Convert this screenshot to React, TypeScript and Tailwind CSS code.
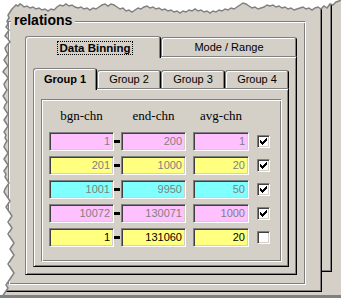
import React from 'react';

// torn paper edge, top (left → right) and left (top → bottom)
const topEdge: [number, number][] = [
  [10, 12], [12, 9], [14, 7], [16, 5], [18, 6], [20, 4], [22, 5], [24, 7], [27, 6], [30, 8], [33, 7], [36, 9],
  [39, 8], [42, 10], [45, 9], [48, 11], [51, 9], [54, 10], [57, 7], [60, 5], [63, 6], [66, 4], [69, 6], [72, 5],
  [75, 7], [78, 8], [81, 7], [84, 9], [87, 8], [90, 10], [93, 8], [96, 9], [99, 7], [102, 5], [105, 4], [108, 6],
  [111, 4], [114, 5], [117, 7], [120, 9], [123, 8], [126, 11], [129, 10], [132, 12], [135, 10], [138, 8], [141, 9],
  [144, 7], [147, 6], [150, 8], [153, 7], [156, 9], [159, 8], [162, 10], [165, 9], [168, 11], [171, 10], [174, 12],
  [177, 11], [180, 13], [183, 11], [186, 12], [189, 10], [192, 11], [195, 9], [198, 11], [201, 10], [204, 12],
  [207, 11], [210, 13], [213, 11], [216, 12], [219, 10], [222, 11], [225, 9], [228, 10], [231, 8], [234, 9],
  [237, 7], [240, 5], [243, 3], [246, 4], [249, 6], [252, 8], [255, 7], [258, 9], [261, 8], [264, 7], [267, 5],
  [270, 6], [273, 5], [276, 7], [279, 6], [282, 8], [285, 7], [288, 9], [291, 8], [294, 10], [297, 9], [300, 8],
  [303, 7], [306, 9], [309, 8], [312, 10], [315, 8], [318, 7], [321, 9], [324, 6], [327, 8], [330, 4], [333, 5],
  [336, 2], [339, 1], [341, 0],
];

const leftEdge: [number, number][] = [
  [10, 12], [8, 15], [9, 18], [7, 21], [8, 24], [6, 27], [9, 30], [7, 33], [5, 36], [8, 39], [10, 42], [7, 45],
  [5, 48], [6, 51], [8, 54], [6, 57], [4, 60], [6, 63], [8, 66], [5, 69], [3, 72], [6, 75], [8, 78], [6, 81],
  [4, 84], [5, 87], [7, 90], [5, 93], [3, 96], [5, 99], [7, 102], [5, 105], [4, 108], [6, 111], [8, 114], [6, 117],
  [4, 120], [6, 123], [8, 126], [6, 129], [4, 132], [6, 135], [5, 138], [7, 141], [5, 144], [4, 147], [6, 150],
  [8, 153], [6, 156], [4, 159], [6, 162], [8, 165], [6, 168], [4, 171], [6, 174], [5, 177], [7, 180], [9, 183],
  [7, 186], [5, 189], [4, 192], [6, 195], [8, 198], [10, 201], [8, 204], [6, 207], [8, 210], [10, 213], [12, 216],
  [10, 219], [8, 222], [10, 225], [12, 228], [10, 231], [8, 234], [10, 237], [12, 240], [14, 243], [12, 246],
  [10, 249], [12, 252], [14, 255], [12, 258], [10, 261], [8, 264], [10, 267], [12, 270], [14, 273], [12, 276],
  [10, 279], [8, 282], [6, 285], [8, 288], [6, 291], [4, 294], [2, 297], [1, 298],
];

const edgeLine = [...[...topEdge].reverse(), ...leftEdge.slice(1)];
const outside = `M0 0 L341 0 ${edgeLine.map(([x, y]) => `L${x} ${y}`).join(' ')} L0 298 Z`;
const edgeStroke = edgeLine.map(([x, y]) => `${x},${y}`).join(' ');

const rows = [
  { bg: 'bg-[#ffc0ff]', bgn: '1', end: '200', avg: '1', on: true, dim: true },
  { bg: 'bg-[#ffff80]', bgn: '201', end: '1000', avg: '20', on: true, dim: true },
  { bg: 'bg-[#80ffff]', bgn: '1001', end: '9950', avg: '50', on: true, dim: true },
  { bg: 'bg-[#ffc0ff]', bgn: '10072', end: '130071', avg: '1000', on: true, dim: true },
  { bg: 'bg-[#ffff80]', bgn: '1', end: '131060', avg: '20', on: false, dim: false },
];

const sunken =
  'border border-[#808080] border-r-white border-b-white shadow-[inset_1px_1px_0_#404040,inset_-1px_-1px_0_#d4d0c8]';
const etched =
  'border border-[#808080] border-r-white border-b-white shadow-[inset_1px_1px_0_#fff,inset_-1px_-1px_0_#808080]';
const panel =
  'border border-black border-t-[#808080] border-l-[#808080] shadow-[inset_1px_1px_0_#fff,inset_-1px_-1px_0_#808080]';
const tabBase =
  'rounded-t-[3px] border border-b-0 border-black border-t-[#808080] border-l-[#808080] bg-[#d4d0c8] shadow-[inset_1px_1px_0_#fff,inset_-1px_0_0_#808080]';

function Field({ value, bg, dim, w }: { value: string; bg: string; dim: boolean; w: string }) {
  return (
    <div
      className={`${w} h-[19px] ${bg} ${sunken} ${dim ? 'text-[#808080]' : 'text-black'} flex items-center justify-end pr-[3px] text-[11px] leading-none`}
    >
      {value}
    </div>
  );
}

function Check({ on }: { on: boolean }) {
  return (
    <div className={`w-[13px] h-[13px] bg-white ${sunken} flex items-center justify-center`}>
      {on && (
        <svg width="7" height="7" viewBox="0 0 7 7" shapeRendering="crispEdges">
          <path
            fill="#000"
            d="M6 0h1v1h-1zM5 1h2v1h-2zM0 2h1v1h-1zM4 2h3v1h-3zM0 3h2v1h-2zM3 3h3v1h-3zM0 4h5v1h-5zM1 5h3v1h-3zM2 6h1v1h-1z"
          />
        </svg>
      )}
    </div>
  );
}

export default function App() {
  return (
    <div className="relative w-[341px] h-[298px] overflow-hidden bg-[#d4d0c8] border-b-[3px] border-[#808080] font-['Liberation_Sans',Arial,sans-serif] text-black">
      <div className="grid">
        {/* page behind */}
        <div className="col-start-1 row-start-1 w-[332px] h-[272px] border-r border-b border-black shadow-[inset_-1px_-1px_0_#808080]" />

        {/* front page */}
        <div className="col-start-1 row-start-1 w-[322px] h-[292px] bg-[#d4d0c8] border-r border-b border-black shadow-[inset_-1px_-1px_0_#808080]">
          <div className={`ml-[8px] mt-[21px] w-[298px] h-[264px] ${etched} flex flex-col`}>
            <span className="-mt-[10px] ml-[2px] w-fit px-[3px] bg-[#d4d0c8] text-[14px] leading-[16px] font-bold">
              relations
            </span>

            {/* outer tab control */}
            <div className="ml-[16px] mt-[8px] w-[272px] flex flex-col">
              <div className="flex items-end h-[20px]">
                <div className={`relative z-10 w-[136px] h-[22px] -mb-[2px] ${tabBase} flex justify-center pt-[4px]`}>
                  <span className="ml-[4px] h-[14px] border border-dotted border-black px-[2px] text-[11.5px] leading-[12px] font-bold">
                    Data Binning
                  </span>
                </div>
                <div className={`w-[136px] h-[19px] ${tabBase} flex items-center justify-center text-[11px]`}>
                  Mode / Range
                </div>
              </div>

              <div className={`h-[219px] ${panel} px-[7px] pt-[11px]`}>
                {/* group tab control */}
                <div className="w-[256px] flex flex-col">
                  <div className="flex items-end h-[20px]">
                    {['Group 1', 'Group 2', 'Group 3', 'Group 4'].map((g, i) =>
                      i === 0 ? (
                        <div
                          key={g}
                          className={`relative z-10 w-[64px] h-[22px] -mb-[2px] ${tabBase} flex justify-center pt-[4px] text-[11px] leading-[13px] font-bold`}
                        >
                          {g}
                        </div>
                      ) : (
                        <div
                          key={g}
                          className={`w-[64px] h-[18px] ${tabBase} flex items-center justify-center text-[11px]`}
                        >
                          {g}
                        </div>
                      )
                    )}
                  </div>

                  <div className={`h-[179px] ${panel} px-[7px] pt-[10px]`}>
                    <div className={`w-[241px] h-[163px] ${etched} px-[7px] pt-[8px]`}>
                      <div className="flex h-[16px] items-center font-['Liberation_Serif','Times_New_Roman',serif] text-[13px]">
                        <div className="w-[65px] text-center">bgn-chn</div>
                        <div className="w-[7px]" />
                        <div className="w-[65px] text-center">end-chn</div>
                        <div className="w-[7px]" />
                        <div className="w-[56px] text-center">avg-chn</div>
                      </div>

                      <div className="mt-[8px] flex flex-col gap-[5px]">
                        {rows.map((r, i) => (
                          <div key={i} className="flex items-center h-[19px]">
                            <Field value={r.bgn} bg={r.bg} dim={r.dim} w="w-[65px]" />
                            <div className="w-[7px] flex items-center">
                              <div className="w-[6px] h-[3px] bg-black" />
                            </div>
                            <Field value={r.end} bg={r.bg} dim={r.dim} w="w-[65px]" />
                            <div className="w-[7px]" />
                            <Field value={r.avg} bg={r.bg} dim={r.dim} w="w-[56px]" />
                            <div className="ml-[8px]">
                              <Check on={r.on} />
                            </div>
                          </div>
                        ))}
                      </div>
                    </div>
                  </div>
                </div>
              </div>
            </div>
          </div>
        </div>
      </div>

      {/* torn edge lies over the page */}
      <svg className="absolute inset-0 pointer-events-none" width="341" height="298" viewBox="0 0 341 298">
        <path d={outside} fill="#fff" />
        <polyline points={edgeStroke} fill="none" stroke="#808080" strokeWidth="1.5" />
      </svg>
    </div>
  );
}
